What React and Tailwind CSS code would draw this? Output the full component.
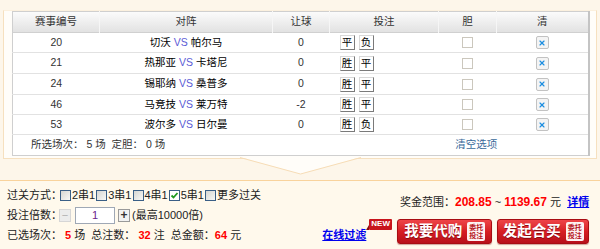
import { X } from 'lucide-react';

const matches = [
  { id: '20', home: '切沃', away: '帕尔马', rq: '0', bets: ['平', '负'], h: 'h-[20px]' },
  { id: '21', home: '热那亚', away: '卡塔尼', rq: '0', bets: ['胜', '平'], h: 'h-[21px]' },
  { id: '24', home: '锡耶纳', away: '桑普多', rq: '0', bets: ['胜', '平'], h: 'h-[21px]' },
  { id: '46', home: '马竞技', away: '莱万特', rq: '-2', bets: ['胜', '平'], h: 'h-[20px]' },
  { id: '53', home: '波尔多', away: '日尔曼', rq: '0', bets: ['胜', '负'], h: 'h-[20px]' },
];

const passTypes = ['2串1', '3串1', '4串1', '5串1', '更多过关'];

function BetBox({ label }) {
  return (
    <span className="inline-flex h-[15px] w-[15px] items-center justify-center border border-t-[#d8d8d8] border-l-[#d8d8d8] border-r-[#7a7a7a] border-b-[#7a7a7a] bg-white text-[10.5px] leading-none text-black">
      {label}
    </span>
  );
}

function XpBox({ checked }) {
  return (
    <span
      className={`inline-flex h-[11px] w-[11px] shrink-0 items-center justify-center border border-[#3a5f86] ${
        checked ? 'bg-white' : 'bg-gradient-to-br from-[#d6d6d2] to-[#f8f8f6]'
      }`}
    >
      {checked && (
        <svg width="9" height="9" viewBox="0 0 9 9">
          <path d="M1.5 4.5 L3.5 6.5 L7.5 2" fill="none" stroke="#1f9a1f" strokeWidth="1.8" />
        </svg>
      )}
    </span>
  );
}

function TrustBadge() {
  return (
    <span className="flex h-[19px] w-[18px] shrink-0 flex-col items-center justify-center rounded-[2px] bg-[#fdf2f2] text-[7px] font-semibold leading-[8px] text-[#b5121a]">
      <span>委托</span>
      <span>投注</span>
    </span>
  );
}

function RedButton({ label, className }) {
  return (
    <button
      className={`flex h-[25px] items-center justify-center gap-[5px] rounded-[3px] border border-[#a80c12] bg-gradient-to-b from-[#ee4448] via-[#d61e24] to-[#b8101a] text-[14.5px] font-bold text-white shadow-[0_1px_1px_rgba(120,0,0,0.35)] ${className}`}
    >
      <span className="[text-shadow:0_1px_0_#8a0a0e]">{label}</span>
      <TrustBadge />
    </button>
  );
}

export default function App() {
  return (
    <div
      className="h-[249px] w-[600px] overflow-hidden bg-[#fdf6ea] text-[#333]"
      style={{ fontFamily: "'Liberation Sans', 'Noto Sans CJK SC', sans-serif" }}
    >
      {/* match panel */}
      <div className="relative mx-[3px] mt-[10px] border border-[#f6e0bf] border-t-[#fbf0de] bg-[#fffdf9] px-[8px] pb-[2px]">
        <table className="w-[576px] table-fixed border-collapse border border-[#cfcfcf] border-r-2 border-r-[#c4c4c4] bg-white text-[10.5px]">
          <colgroup>
            <col className="w-[87px]" />
            <col className="w-[173px]" />
            <col className="w-[57px]" />
            <col className="w-[109px]" />
            <col className="w-[58px]" />
            <col className="w-[92px]" />
          </colgroup>
          <thead>
            <tr className="h-[21px] border-b border-[#d0d0d0] bg-gradient-to-b from-[#fbfbfb] to-[#e2e2e2] text-[#333]">
              <th className="font-normal">赛事编号</th>
              <th className="border-l border-l-[#f6f6f6] font-normal">对阵</th>
              <th className="border-l border-l-[#f6f6f6] font-normal">让球</th>
              <th className="border-l border-l-[#f6f6f6] font-normal">投注</th>
              <th className="border-l border-l-[#f6f6f6] font-normal">胆</th>
              <th className="border-l border-l-[#f6f6f6] font-normal">清</th>
            </tr>
          </thead>
          <tbody>
            {matches.map((m) => (
              <tr key={m.id} className={`${m.h} border-b border-[#e2e2e2]`}>
                <td className="text-center">{m.id}</td>
                <td className="text-center text-black">
                  {m.home} <span className="text-[#5b5bd6]">VS</span> {m.away}
                </td>
                <td className="text-center">{m.rq}</td>
                <td className="pl-[10px]">
                  <div className="flex gap-[4px]">
                    {m.bets.map((b) => (
                      <BetBox key={b} label={b} />
                    ))}
                  </div>
                </td>
                <td>
                  <div className="flex justify-center">
                    <span className="h-[11px] w-[11px] border border-[#cbc7bd] bg-white" />
                  </div>
                </td>
                <td>
                  <div className="flex justify-center">
                    <span className="flex h-[13px] w-[13px] items-center justify-center rounded-[2px] border border-[#c2c2c2] bg-[#f4f4f4]">
                      <X size={8} strokeWidth={3.5} color="#1d8ee0" />
                    </span>
                  </div>
                </td>
              </tr>
            ))}
            <tr className="h-[21px]">
              <td colSpan={6}>
                <div className="flex items-center pl-[18px]">
                  <span>所选场次： 5 场&nbsp; 定胆： 0 场</span>
                  <span className="ml-[290px] text-[#3a6a9a]">清空选项</span>
                </div>
              </td>
            </tr>
          </tbody>
        </table>
        {/* pointer notch */}
        <svg className="absolute left-[236px] top-full -mt-[1px]" width="121" height="19" viewBox="0 0 121 19">
          <polygon points="0,0 60.5,17 121,0" fill="#fffdf9" />
          <polyline points="0,0.5 60.5,17 121,0.5" fill="none" stroke="#f6dcb6" strokeWidth="1" />
        </svg>
      </div>

      {/* betting bar */}
      <div className="mt-[21px] flex h-[70px] border-t border-[#f9d39c] bg-[#fff9ec] text-[11px] text-[#222]">
        <div className="flex w-[397px] flex-col pl-[7px] pr-[5px] pt-[4px]">
          <div className="flex h-[20px] items-center whitespace-nowrap">
            <span className="w-[53px] shrink-0">过关方式：</span>
            {passTypes.map((p) => (
              <span key={p} className="flex items-center">
                <XpBox checked={p === '5串1'} />
                <span className="ml-[1px] mr-[1px]">{p}</span>
              </span>
            ))}
          </div>
          <div className="flex h-[20px] items-center whitespace-nowrap">
            <span className="w-[52px] shrink-0">投注倍数：</span>
            <span className="flex h-[13px] w-[12px] shrink-0 items-center justify-center border border-[#d6d6d6] bg-[#ececec] text-[11px] leading-none text-[#b0b0b0]">
              −
            </span>
            <span className="ml-[4px] flex h-[17px] w-[40px] shrink-0 items-center justify-center border border-[#9fa8b5] bg-white text-[#6a1d8a]">
              1
            </span>
            <span className="ml-[3px] flex h-[13px] w-[12px] shrink-0 items-center justify-center border border-[#9a9a9a] bg-[#f2f2f2] text-[12px] font-bold leading-none text-[#333]">
              +
            </span>
            <span className="ml-[2px]">(最高10000倍)</span>
          </div>
          <div className="flex h-[20px] items-center whitespace-nowrap">
            <span>
              已选场次：<b className="text-[#f00]"> 5 </b>场&nbsp; 总注数：<b className="text-[#f00]"> 32 </b>注&nbsp; 总金额：
              <b className="text-[#f00]">64 </b>元
            </span>
            <span className="ml-auto flex items-start">
              <a className="font-bold text-[#0000ee] underline">在线过滤</a>
              <span className="relative -mt-[8px] ml-[3px] flex h-[11px] items-center rounded-[1px] bg-[#c8141c] px-[2px] text-[8px] font-bold leading-none text-white">
                <span className="absolute -left-[3px] bottom-0 h-0 w-0 border-b-[5px] border-l-[3px] border-b-[#8a0a0e] border-l-transparent" />
                NEW
              </span>
            </span>
          </div>
        </div>
        <div className="flex w-[192px] flex-col pt-[14px]">
          <div className="flex h-[14px] items-center whitespace-nowrap pl-[3px]">
            奖金范围：<b className="text-[12px] text-[#f00]">208.85</b>&nbsp;~&nbsp;
            <b className="text-[12px] text-[#f00]">1139.67</b>&nbsp;元&nbsp;&nbsp;
            <a className="font-bold text-[#0000ee] underline">详情</a>
          </div>
          <div className="mt-[10px] flex gap-[5px]">
            <RedButton label="我要代购" className="w-[96px]" />
            <RedButton label="发起合买" className="w-[92px]" />
          </div>
        </div>
      </div>
    </div>
  );
}
